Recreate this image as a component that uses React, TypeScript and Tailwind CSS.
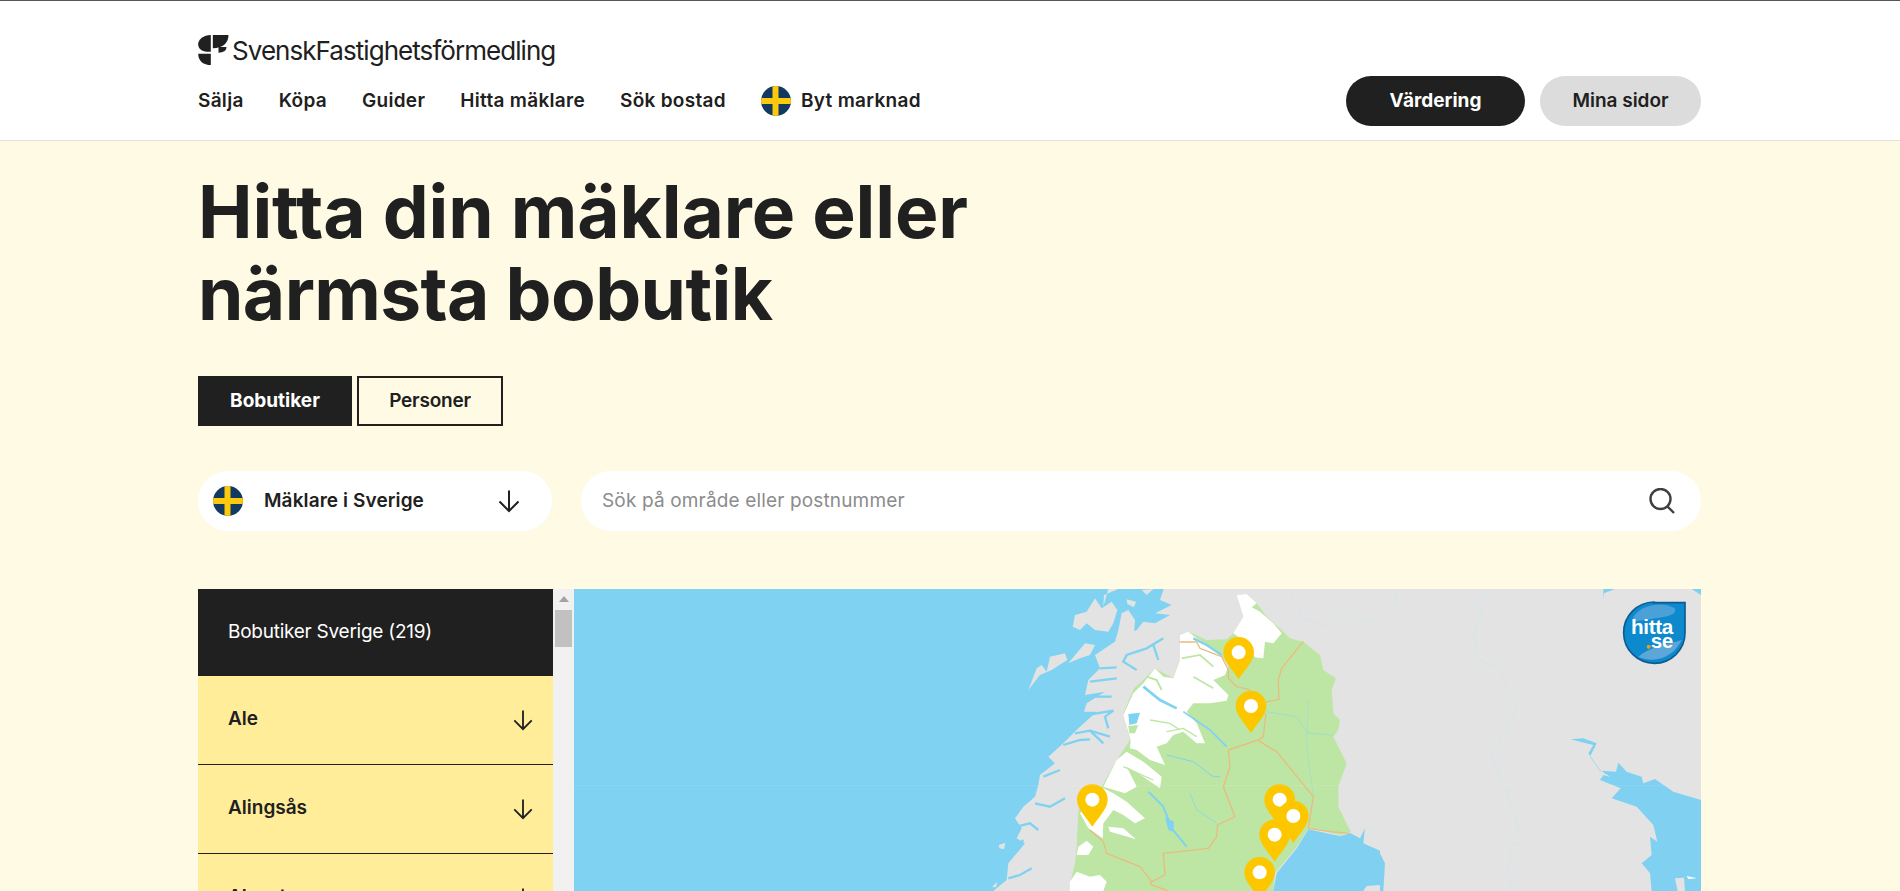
const navItems = ["Sälja", "Köpa", "Guider", "Hitta mäklare", "Sök bostad"];
const cities = ["Ale", "Alingsås", "Alvesta"];

function Flag() {
  return (
    <svg viewBox="0 0 30 30" className="h-[30px] w-[30px] shrink-0">
      <defs>
        <clipPath id="flag-clip">
          <circle cx="15" cy="15" r="15" />
        </clipPath>
      </defs>
      <g clipPath="url(#flag-clip)">
        <rect width="30" height="30" fill="#123a60" />
        <rect x="11.5" width="6" height="30" fill="#fdc90f" />
        <rect y="12" width="30" height="6" fill="#fdc90f" />
      </g>
    </svg>
  );
}

function ArrowDown({ size = 24 }: { size?: number }) {
  return (
    <svg
      viewBox="0 0 24 24"
      width={size}
      height={size}
      fill="none"
      stroke="#202020"
      strokeWidth="2"
      className="shrink-0"
    >
      <path d="M12 1.5V22M2.5 12.5 12 22l9.5-9.5" />
    </svg>
  );
}

function Logo() {
  return (
    <div className="flex items-center">
      <svg viewBox="24 22 92 90" className="h-[30px] w-[31px] shrink-0" fill="#202020">
        <path d="M62 22C40 22 24 35 24 50c0 13 11 22 26 22h12z" />
        <path d="M68 22h47c0 24-18 40-47 40z" />
        <path d="M85 58h24c0 11-10 17-24 17z" />
        <path d="M24 78h38v34c-22 0-38-12-38-34z" />
      </svg>
      <span className="mt-[2px] ml-[3px] text-[26px] leading-none tracking-[-0.95px] text-[#202020]">
        SvenskFastighetsförmedling
      </span>
    </div>
  );
}

function Pin({ x, y }: { x: number; y: number }) {
  return (
    <g transform={`translate(${x} ${y})`}>
      <path d="M0 81C-18 52-46 28-46 0a46 46 0 0 1 92 0C46 28 18 52 0 81z" fill="#fdc700" />
      <circle r="21" fill="#fff" />
    </g>
  );
}

function SwedenMap() {
  return (
    <svg viewBox="574 589 1127 302" className="h-[302px] w-[1127px] shrink-0">
      <rect x="574" y="589" width="1127" height="302" fill="#e3e3e3" />
      {/* coordinates below are zoomed crops at 3x */}
      <g transform="translate(980 580) scale(0.33333)">
        <path
          d="M-1230 0H560L540 60 575 75 525 100 570 105 525 130 490 125 470 150 420 175 345 225 360 265 325 300 315 345 375 335 320 370 312 395 350 395 300 440 280 460 250 490 205 530 225 550 180 585 175 615 165 650 130 680 105 715 125 745 110 775 135 790 85 850 80 900 40 933H-1230z"
          fill="#7fd2f1"
        />
        <g fill="#e3e3e3">
          <path d="M278 140 285 105 320 95 345 55 365 85 395 65 412 90 400 130 385 155 345 150 320 130 300 150z" />
          <path d="M370 80 372 45 415 27H385z" />
          <path d="M425 100 445 90 465 120 462 165 430 170 405 185 415 150z" />
          <path d="M440 58 468 65 462 82 442 72z" />
          <path d="M485 30 520 27 500 45z" />
          <path d="M145 330 170 265 185 255 200 275 210 230 255 220 262 240 215 270 180 285z" />
          <path d="M265 250 315 190 345 195 330 225 300 235z" />
          <path d="M56 795 76 788 72 808 58 805z" />
          <path d="M36 920 52 906 48 922z" />
        </g>
        <g fill="none" stroke="#7fd2f1" strokeWidth="7">
          <path d="M550 175 500 205 440 225 430 245 470 270" />
          <path d="M520 195 535 240" />
          <path d="M360 265 410 262" />
          <path d="M330 305 410 295" />
          <path d="M320 350 395 350" />
          <path d="M320 405 400 392 375 410 385 445" />
          <path d="M285 460 330 452 390 470" />
          <path d="M330 452 370 490" />
          <path d="M250 495 300 480 330 478" />
          <path d="M190 590 240 570" />
          <path d="M165 670 210 680 255 655" />
          <path d="M110 740 150 730 175 750" />
          <path d="M85 895 120 885 155 865" />
          <path d="M130 780 110 800" />
        </g>
        <path d="M500 85 520 92 488 120z" fill="#7fd2f1" />
        {/* Sweden */}
        <path
          d="M770 45 800 42 830 70 860 110 905 150 930 175 970 185 1020 225 1030 270 1068 295 1055 330 1060 400 1080 420 1075 450 1060 470 1100 550 1075 620 1075 680 1112 755 1080 765 1040 755 985 745 950 800 885 880 880 933H265L285 850 290 800 295 690 365 620 410 540 450 480 430 400 462 325 490 300 525 265 580 295 600 240 600 165 625 155 680 180 740 178 760 160 790 110z"
          fill="#bde6a5"
        />
        <g fill="#fff">
          <path d="M770 45 800 42 830 70 815 82 840 95 880 130 905 160 880 190 855 185 850 235 825 232 800 190 760 160 790 110z" />
          <path d="M600 165 625 155 650 175 700 205 730 235 745 260 735 285 700 300 745 345 740 362 690 370 640 370 620 395 650 430 675 490 650 490 610 455 580 465 560 490 530 500 555 555 510 540 470 510 450 505 452 480 430 405 460 340 490 310 525 265 550 290 580 295 600 240z" />
          <path d="M440 515 490 545 545 590 540 625 490 590 440 560 470 620 435 640 370 620 410 540z" />
          <path d="M370 625 400 640 440 665 495 715 465 730 430 705 400 690 370 730 368 775 325 745 300 700z" />
          <path d="M385 740 430 745 468 778 425 765 390 755z" />
          <path d="M295 800 320 782 340 800 325 825 290 825z" />
          <path d="M270 905 290 875 330 890 360 885 380 905 370 933H268z" />
        </g>
        <g fill="none" stroke="#bde6a5">
          <path d="M605 235 660 225 700 260" strokeWidth="5" />
          <path d="M640 290 700 325" strokeWidth="5" />
          <path d="M500 290 530 300 545 330" strokeWidth="6" />
          <path d="M560 455 610 445 650 470" strokeWidth="4" />
          <path d="M510 420 570 430 600 450" strokeWidth="4" />
          <path d="M430 560 520 600" strokeWidth="4" />
        </g>
        <g fill="none" stroke="#7fd2f1">
          <path d="M640 175 680 195 725 225" strokeWidth="7" />
          <path d="M490 320 540 360 590 385" strokeWidth="8" />
          <path d="M610 395 690 450 740 500" strokeWidth="5" />
          <path d="M560 525 640 545 700 590 720 590" strokeWidth="3" />
          <path d="M505 635 550 680 575 745 620 800" strokeWidth="6" />
          <path d="M630 640 650 690 710 730" strokeWidth="2" />
          <path d="M860 395 950 410 985 460 1060 465" strokeWidth="2" opacity="0.7" />
          <path d="M985 360 980 500 1000 650" strokeWidth="2" opacity="0.5" />
        </g>
        <path d="M445 402 480 398 470 430 448 435z" fill="#7fd2f1" />
        <path d="M555 712 582 725 580 755 565 750z" fill="#7fd2f1" />
        <path d="M445 438 475 435 465 460 448 460z" fill="#bde6a5" />
        <g fill="none" stroke="#e9bc7e" strokeWidth="4" strokeLinejoin="round">
          <path d="M598 186H650L660 205 725 230 745 270 745 295 770 320 805 328 815 340" />
          <path d="M970 185 905 265 895 300 897 358 858 366" />
          <path d="M858 400 850 470 835 480 745 510 750 560 730 620 765 710 712 735 710 770 685 805 550 820 555 885 515 905 480 860 380 820 370 785 330 750" />
          <path d="M835 482 890 515 1000 650 985 745 1050 755 1110 760" />
          <path d="M510 905 515 915 565 933" />
        </g>
        {/* Finnish border */}
        <path
          d="M925 27 960 90 965 118 1020 130 1040 140 1100 95 1165 135 1200 110"
          fill="none"
          stroke="#d3e5ec"
          strokeWidth="3"
        />
        {/* gulf */}
        <path
          d="M985 748 1040 760 1080 768 1112 760 1140 775 1155 745 1150 790 1200 812V933H880L890 880 950 805z"
          fill="#80d1f1"
        />
        <path d="M1150 933 1160 918 1200 915V933z" fill="#e3e3e3" />
        <Pin x={776} y={217} />
        <Pin x={813} y={378} />
        <Pin x={337} y={659} />
        <Pin x={899} y={659} />
        <Pin x={940} y={708} />
        <Pin x={884} y={764} />
        <Pin x={839} y={877} />
      </g>
      <g transform="translate(1380 580) scale(0.33333)">
        <path
          d="M50 27 45 70 0 95M310 27 325 45 285 75 310 95 280 165 300 240 355 265 385 330 415 355 400 410 335 530 400 685 425 790 395 795 385 880 400 890 385 933"
          fill="none"
          stroke="#d3e5ec"
          strokeWidth="3"
        />
        <path d="M0 820 15 850 10 933H0z" fill="#80d1f1" />
        <path d="M670 60 672 40 705 27H670z" fill="#80d1f1" />
        <path d="M935 27 963 45V27z" fill="#80d1f1" />
        <path
          d="M572 478 610 475 650 490 630 530 660 572 708 575 715 548 740 575 785 590 790 610 825 597 880 635 963 660V933H815L810 880 785 850 815 825 810 770 832 785 820 735 770 680 695 655 722 625 660 600 670 585 690 590 660 570 625 520 640 495 600 485z"
          fill="#80d1f1"
        />
        <path d="M885 895 912 893 915 933H893z" fill="#e3e3e3" />
        <path d="M920 888 950 895 925 897z" fill="#fff" />
        {/* hitta.se badge */}
        <path
          d="M822 68H915V158A92 92 0 1 1 822 66z"
          fill="#0d8ace"
          stroke="#0e5b92"
          strokeWidth="5"
        />
        <path d="M775 230C810 200 860 195 905 180 885 225 830 255 775 230z" fill="#5ea6d8" />
        <path d="M760 110C790 70 850 65 885 85 890 110 860 110 760 125z" fill="#4ba0d8" />
        <text
          x="753"
          y="163"
          fill="#fff"
          fontSize="62"
          fontWeight="700"
          fontFamily="'Liberation Sans', sans-serif"
          letterSpacing="-1"
        >
          hitta
        </text>
        <text
          x="812"
          y="205"
          fill="#fff"
          fontSize="62"
          fontWeight="700"
          fontFamily="'Liberation Sans', sans-serif"
          letterSpacing="-1"
        >
          se
        </text>
        <circle cx="806" cy="200" r="6" fill="#f39a1e" />
      </g>
      <rect x="574" y="785" width="1127" height="1" fill="#fff" opacity="0.08" />
    </svg>
  );
}

export default function App() {
  return (
    <div className="h-[891px] w-full overflow-hidden bg-[#fffae4] font-['Inter',sans-serif] text-[#202020]">
      <header className="h-[141px] border-t border-b border-t-[#555] border-b-[#e2e0d8] bg-white">
        <div className="ml-[198px] flex w-[1503px] flex-col pt-[34px]">
          <Logo />
          <div className="mt-[16px] flex items-start justify-between">
            <nav className="mt-[5px] flex h-[30px] items-center gap-[35px] text-[19px] font-semibold tracking-[0.3px]">
              {navItems.map((item) => (
                <a key={item}>{item}</a>
              ))}
              <a className="flex items-center gap-[10px]">
                <Flag />
                Byt marknad
              </a>
            </nav>
            <div className="-mt-[5px] flex gap-[15px] text-[19px] font-semibold">
              <button className="h-[50px] w-[179px] rounded-full bg-[#202020] font-bold text-white">
                Värdering
              </button>
              <button className="h-[50px] w-[161px] rounded-full bg-[#dcdcdc]">Mina sidor</button>
            </div>
          </div>
        </div>
      </header>

      <main className="ml-[198px] w-[1503px] pt-[30px]">
        <h1 className="text-[73px] leading-[82px] font-bold tracking-[-0.1px]">
          Hitta din mäklare eller
          <br />
          <span className="tracking-[-0.6px]">närmsta bobutik</span>
        </h1>

        <div className="mt-[41px] flex gap-[5px] text-[19px] font-bold">
          <button className="h-[50px] w-[154px] bg-[#202020] text-white">Bobutiker</button>
          <button className="h-[50px] w-[146px] border-2 border-[#202020] font-semibold tracking-[-0.2px]">
            Personer
          </button>
        </div>

        <div className="mt-[45px] flex gap-[29px]">
          <div className="flex h-[60px] w-[354px] items-center rounded-full bg-white pr-[31px] pl-[15px]">
            <Flag />
            <span className="ml-[21px] flex-1 text-[19px] font-semibold tracking-[0.1px]">
              Mäklare i Sverige
            </span>
            <ArrowDown />
          </div>
          <div className="flex h-[60px] flex-1 items-center justify-between rounded-full bg-white pr-[26px] pl-[21px]">
            <span className="text-[19px] tracking-[0.15px] text-[#8c8c8c]">
              Sök på område eller postnummer
            </span>
            <svg viewBox="0 0 26 26" className="h-[26px] w-[26px]" fill="none" stroke="#404040" strokeWidth="2.4">
              <circle cx="11.5" cy="11" r="10" />
              <path d="M18.5 18.5 25 25" />
            </svg>
          </div>
        </div>

        <div className="mt-[58px] flex h-[302px] overflow-hidden">
          <div className="w-[355px] shrink-0">
            <div className="flex h-[87px] items-center bg-[#202020] pl-[30px] text-[19px] tracking-[-0.25px] text-white">
              Bobutiker Sverige (219)
            </div>
            {cities.map((city) => (
              <div
                key={city}
                className="flex h-[89px] items-center justify-between border-b border-[#202020] bg-[#ffed9a] pr-[19px] pl-[30px] text-[19px] font-semibold"
              >
                <span className="-mt-[2px]">{city}</span>
                <ArrowDown size={22} />
              </div>
            ))}
          </div>
          <div className="flex w-[21px] shrink-0 flex-col items-center bg-[#f1f1f1]">
            <div className="mt-[7px] h-0 w-0 border-x-[5px] border-b-[6px] border-x-transparent border-b-[#a3a3a3]" />
            <div className="mt-[8px] h-[37px] w-[17px] bg-[#c1c1c1]" />
          </div>
          <SwedenMap />
        </div>
      </main>
    </div>
  );
}
